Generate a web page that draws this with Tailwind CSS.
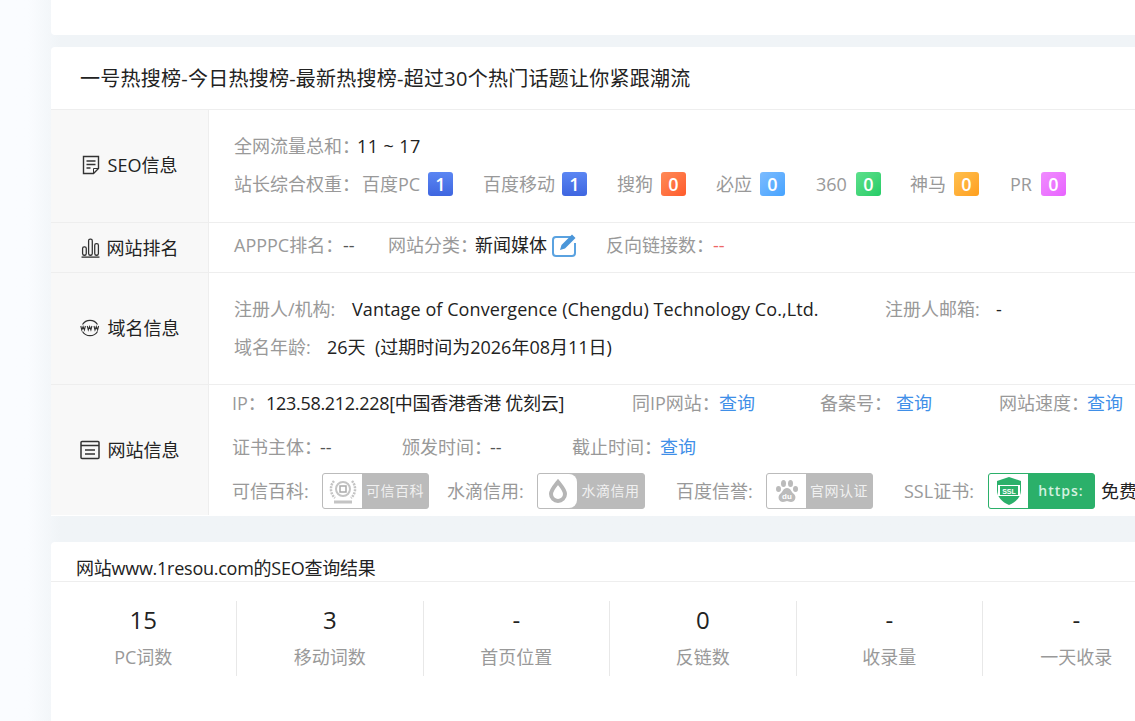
<!DOCTYPE html>
<html lang="zh-CN">
<head>
    <meta charset="utf-8" />
    <title>一号热搜榜 SEO查询</title>
    <script src="https://cdn.jsdelivr.net/npm/@tailwindcss/browser@4"></script>
</head>
<body class="h-[721px] overflow-hidden whitespace-nowrap bg-gradient-to-r from-[#fafcff] from-[28px] to-[#f0f4f7] to-[60px] font-['Open_Sans','Noto_Sans_CJK_SC',sans-serif] text-[18px] leading-[24px] text-[#222]">
<div class="ml-[51px] w-[1200px]">
    <div class="h-[35px] rounded-b bg-white"></div>

    <!-- 基本信息 -->
    <div class="mt-[12px] h-[469px] rounded-t bg-white">
        <div class="flex h-[63px] items-center border-b border-[#eee] pl-[29px] pt-[2px] text-[20px] tracking-[0.25px]">一号热搜榜-今日热搜榜-最新热搜榜-超过30个热门话题让你紧跟潮流</div>

        <div class="flex h-[113px] border-b border-[#eee]">
            <div class="flex w-[158px] items-center justify-center gap-[8px] border-r border-[#eee] bg-[#f8f8f8] pb-[2px]">
                <svg class="h-[20px] w-[18px]" viewBox="0 0 18 20" fill="none" stroke="#333" stroke-width="1.4"><path d="M1.5 1.5h15v12l-5 5h-10z"/><path d="M4.500 6h9M4.500 9.500h9M4.500 13h4"/><path d="M16.500 13.500h-5v5" stroke-width="1"/></svg>
                <span>SEO信息</span>
            </div>
            <div class="pl-[25px] pt-[24px]">
                <div class="flex h-[24px] items-center"><span class="w-[123px] text-[#999]">全网流量总和：</span><span class="tracking-[0.4px]">11 ~ 17</span></div>
                <div class="mt-[14px] flex h-[24px] items-center text-[#999]">
                    <span class="w-[128px]">站长综合权重：</span>
                    <span class="w-[66px]">百度PC</span><span class="h-[24px] w-[25px] rounded-[3px] bg-gradient-to-b from-[#5b86f3] to-[#3f66e0] text-center font-semibold text-white">1</span>
                    <span class="ml-[30px] w-[79px]">百度移动</span><span class="h-[24px] w-[25px] rounded-[3px] bg-gradient-to-b from-[#5b86f3] to-[#3f66e0] text-center font-semibold text-white">1</span>
                    <span class="ml-[30px] w-[44px]">搜狗</span><span class="h-[24px] w-[25px] rounded-[3px] bg-gradient-to-br from-[#ff8a57] to-[#ff5a2a] text-center font-semibold text-white">0</span>
                    <span class="ml-[30px] w-[44px]">必应</span><span class="h-[24px] w-[25px] rounded-[3px] bg-gradient-to-br from-[#7cbcff] to-[#45a3ff] text-center font-semibold text-white">0</span>
                    <span class="ml-[31px] w-[40px]">360</span><span class="h-[24px] w-[25px] rounded-[3px] bg-gradient-to-br from-[#5ce08c] to-[#22cc66] text-center font-semibold text-white">0</span>
                    <span class="ml-[29px] w-[44px]">神马</span><span class="h-[24px] w-[25px] rounded-[3px] bg-gradient-to-br from-[#ffc04d] to-[#ff9f1a] text-center font-semibold text-white">0</span>
                    <span class="ml-[31px] w-[31px]">PR</span><span class="h-[24px] w-[25px] rounded-[3px] bg-gradient-to-br from-[#f08cff] to-[#e862ff] text-center font-semibold text-white">0</span>
                </div>
            </div>
        </div>

        <div class="flex h-[50px] border-b border-[#eee]">
            <div class="flex w-[158px] items-center justify-center gap-[7px] border-r border-[#eee] bg-[#f8f8f8]">
                <svg class="h-[20px] w-[19px]" viewBox="0 0 18 18" preserveAspectRatio="none" fill="none" stroke="#333" stroke-width="1.2"><rect x="1.500" y="8" width="3.500" height="7.500" rx="1.500"/><rect x="7.200" y="1" width="3.500" height="14.500" rx="1.500"/><rect x="13" y="5" width="3.500" height="10.500" rx="1.500"/><path d="M0.500 17.200h17"/></svg>
                <span>网站排名</span>
            </div>
            <div class="flex items-center pb-[6px] pl-[25px] text-[#999]">
                <span class="w-[109px]">APPPC排名：</span><span class="w-[45px] text-[#555]">--</span>
                <span class="w-[87px]">网站分类：</span><span class="text-[#222]">新闻媒体</span>
                <svg class="ml-[4px] h-[26px] w-[27px]" viewBox="0 0 27 26" fill="none"><path d="M20 5H5a3 3 0 0 0-3 3v13a3 3 0 0 0 3 3h16a3 3 0 0 0 3-3V11" stroke="#5aa2e0" stroke-width="2"/><path d="M9 18l1.500-5L21 2.500l3.500 3.500L14 16.500z" fill="#4a96d9"/></svg>
                <span class="ml-[28px] w-[107px]">反向链接数：</span><span class="text-[#e66]">--</span>
            </div>
        </div>

        <div class="flex h-[112px] border-b border-[#eee]">
            <div class="flex w-[158px] items-center justify-center gap-[8px] border-r border-[#eee] bg-[#f8f8f8] pb-[2px]">
                <svg class="h-[20px] w-[20px]" viewBox="0 0 20 20" fill="none" stroke="#333" stroke-width="1.200"><path d="M2.500 6.500a8.800 8.800 0 0 1 15 0M2.500 13.500a8.800 8.800 0 0 0 15 0"/><path d="M0.800 8l1 4 1.300-3.500 1.300 3.500 1-4M7.300 8l1 4 1.300-3.500 1.300 3.500 1-4M14 8l1 4 1.300-3.500 1.300 3.500 1-4" stroke-width="1.100"/></svg>
                <span>域名信息</span>
            </div>
            <div class="pl-[25px] pt-[24px]">
                <div class="flex h-[24px] items-center"><span class="w-[118px] text-[#999]">注册人/机构:</span><span class="w-[533px] tracking-[0.08px]">Vantage of Convergence (Chengdu) Technology Co.,Ltd.</span><span class="w-[111px] text-[#999]">注册人邮箱:</span><span>-</span></div>
                <div class="mt-[14px] flex h-[24px] items-center"><span class="w-[93px] text-[#999]">域名年龄:</span><span>26天&nbsp; (过期时间为2026年08月11日)</span></div>
            </div>
        </div>

        <div class="flex h-[130px]">
            <div class="flex w-[158px] items-center justify-center gap-[8px] border-r border-[#eee] bg-[#f8f8f8]">
                <svg class="h-[20px] w-[20px]" viewBox="0 0 20 20" fill="none" stroke="#333" stroke-width="1.500"><rect x="1" y="1.500" width="18" height="17" rx="1"/><path d="M1 5.500h18M5 10h10M5 14h10"/></svg>
                <span>网站信息</span>
            </div>
            <div class="pl-[23px] pt-[6px] text-[#999]">
                <div class="flex h-[24px] items-center">
                    <span class="w-[34px]">IP：</span><span class="w-[366px] tracking-[-0.3px] text-[#222]">123.58.212.228[中国香港香港 优刻云]</span>
                    <span class="w-[87px]">同IP网站：</span><span class="w-[101px] text-[#3f8fe8]">查询</span>
                    <span class="w-[76px]">备案号：</span><span class="w-[103px] text-[#3f8fe8]">查询</span>
                    <span class="w-[88px]">网站速度：</span><span class="text-[#3f8fe8]">查询</span>
                </div>
                <div class="mt-[20px] flex h-[24px] items-center">
                    <span class="w-[88px]">证书主体：</span><span class="w-[82px] text-[#555]">--</span>
                    <span class="w-[88px]">颁发时间：</span><span class="w-[82px] text-[#555]">--</span>
                    <span class="w-[88px]">截止时间：</span><span class="text-[#3f8fe8]">查询</span>
                </div>
                <div class="mt-[14px] flex h-[36px] items-center">
                    <span class="w-[90px]">可信百科:</span>
                    <div class="flex h-[36px] w-[107px] overflow-hidden rounded-[3px] border border-[#bbb] bg-[#bbb]">
                        <div class="flex w-[39px] items-center justify-center bg-white"><svg class="h-[28px] w-[28px]" viewBox="0 0 28 28" fill="none" stroke="#c4c4c4" stroke-width="2"><circle cx="14" cy="12" r="7"/><path d="M5 4a12 12 0 0 0 1 17M23 4a12 12 0 0 1-1 17" stroke-width="2.500" stroke-dasharray="2 1"/><path d="M11 9h6v6h-6z" stroke="#aaa" stroke-width="1.500"/><path d="M5 25h18" stroke-width="3"/></svg></div>
                        <span class="flex-1 text-center text-[14px] leading-[34px] tracking-[0.5px] text-[#f0f0f0]">可信百科</span>
                    </div>
                    <span class="ml-[18px] w-[90px]">水滴信用:</span>
                    <div class="flex h-[36px] w-[108px] overflow-hidden rounded-[3px] border border-[#bbb] bg-[#bbb]">
                        <div class="flex w-[39px] items-center justify-center rounded-r-[8px] bg-white"><svg class="h-[26px] w-[22px]" viewBox="0 0 22 26" fill="none" stroke="#b5b5b5" stroke-width="4"><path d="M11 4c4 5 7 8 7 12a7 7 0 0 1-14 0c0-4 3-7 7-12z"/></svg></div>
                        <span class="flex-1 text-center text-[14px] leading-[34px] tracking-[0.5px] text-[#f0f0f0]">水滴信用</span>
                    </div>
                    <span class="ml-[31px] w-[90px]">百度信誉:</span>
                    <div class="flex h-[36px] w-[107px] overflow-hidden rounded-[3px] border border-[#bbb] bg-[#bbb]">
                        <div class="flex w-[39px] items-center justify-center bg-white"><svg class="h-[28px] w-[26px]" viewBox="0 0 26 28" fill="#bbb"><ellipse cx="9.500" cy="6.500" rx="2.500" ry="3.500"/><ellipse cx="16.500" cy="6.500" rx="2.500" ry="3.500"/><ellipse cx="4.500" cy="12" rx="2.500" ry="3"/><ellipse cx="21.500" cy="12" rx="2.500" ry="3"/><path d="M13 11c4 0 4 4 7 6 3 3 1 8-3 8-2 0-3-1-4-1s-2 1-4 1c-4 0-6-5-3-8 3-2 3-6 7-6z"/><text x="13" y="22" text-anchor="middle" font-size="8" font-weight="700" fill="#fff" font-family="Liberation Sans">du</text></svg></div>
                        <span class="flex-1 text-center text-[14px] leading-[34px] tracking-[0.5px] text-[#f0f0f0]">官网认证</span>
                    </div>
                    <span class="ml-[31px] w-[84px]">SSL证书:</span>
                    <div class="flex h-[36px] w-[107px] overflow-hidden rounded-[3px] border border-[#2bb06a] bg-[#2bb06a]">
                        <div class="flex w-[39px] items-center justify-center bg-white"><svg class="h-[30px] w-[28px]" viewBox="0 0 28 30" fill="#2bb06a"><path d="M14 1l12 4v9c0 7-5 12-12 15C7 26 2 21 2 14V5z"/><rect x="3" y="9" width="22" height="11" fill="#fff"/><rect x="5" y="10" width="18" height="9" fill="#2bb06a"/><text x="14" y="17.500" text-anchor="middle" font-size="7" font-weight="700" fill="#fff" font-family="Liberation Sans">SSL</text></svg></div>
                        <span class="flex-1 text-center text-[14px] font-semibold leading-[34px] tracking-[1px] text-[#d4f0e0]">https:</span>
                    </div>
                    <span class="ml-[6px] text-[#222]">免费</span>
                </div>
            </div>
        </div>
    </div>

    <!-- SEO查询结果 -->
    <div class="mt-[26px] h-[179px] rounded-t bg-white">
        <div class="flex h-[40px] items-end border-b border-[#eee] pl-[25px] text-[18px] leading-[26px] tracking-[-0.25px]">网站www.1resou.com的SEO查询结果</div>
        <div class="-ml-[0.500px] flex pt-[19px]">
            <div class="h-[75px] w-[186.500px] border-r border-[#e8e8e8] text-center"><div class="text-[24px] leading-[38px]">15</div><div class="leading-[36px] text-[#999]">PC词数</div></div>
            <div class="h-[75px] w-[186.500px] border-r border-[#e8e8e8] text-center"><div class="text-[24px] leading-[38px]">3</div><div class="leading-[36px] text-[#999]">移动词数</div></div>
            <div class="h-[75px] w-[186.500px] border-r border-[#e8e8e8] text-center"><div class="text-[24px] leading-[38px]">-</div><div class="leading-[36px] text-[#999]">首页位置</div></div>
            <div class="h-[75px] w-[186.500px] border-r border-[#e8e8e8] text-center"><div class="text-[24px] leading-[38px]">0</div><div class="leading-[36px] text-[#999]">反链数</div></div>
            <div class="h-[75px] w-[186.500px] border-r border-[#e8e8e8] text-center"><div class="text-[24px] leading-[38px]">-</div><div class="leading-[36px] text-[#999]">收录量</div></div>
            <div class="h-[75px] w-[186.500px] text-center"><div class="text-[24px] leading-[38px]">-</div><div class="leading-[36px] text-[#999]">一天收录</div></div>
        </div>
    </div>
</div>
</body>
</html>
